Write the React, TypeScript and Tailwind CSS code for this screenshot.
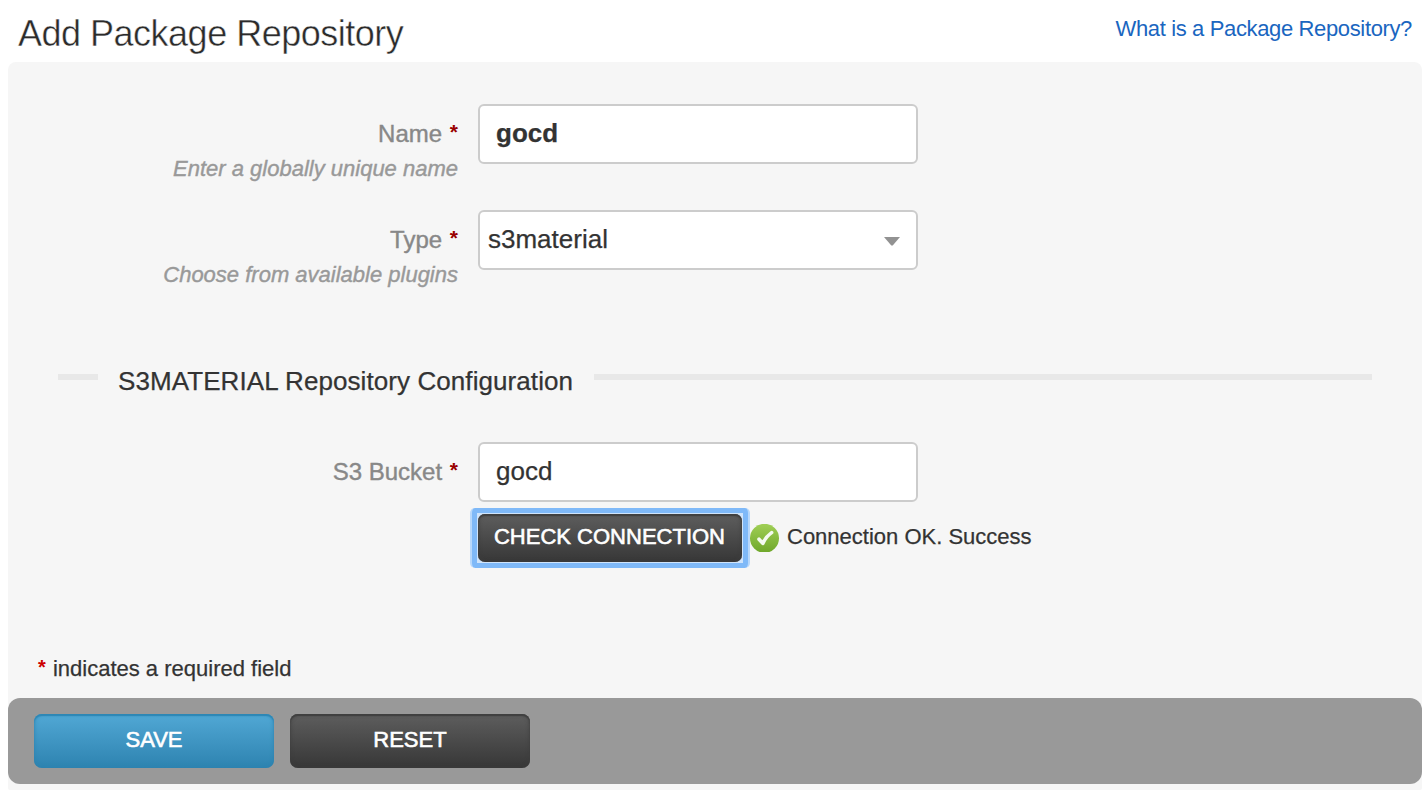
import type { ReactNode } from "react";

const fieldBox =
  "h-[60px] w-[440px] rounded-[6px] border-2 border-[#ccc] bg-white text-[26px] leading-[54px] text-[#333] [-webkit-text-stroke:0.25px_#333]";
const buttonText =
  "text-[22px] leading-none text-white uppercase whitespace-nowrap [-webkit-text-stroke:0.6px_white]";
const darkButton =
  "bg-linear-to-b from-[#5e5e5e] to-[#373737] shadow-[inset_0_2px_1px_#404040,inset_0_0_4px_#3c3c3c]";

function Required() {
  return (
    <span className="ml-px align-[3px] text-[21px] leading-none font-bold text-[#990000] [-webkit-text-stroke:0]">
      *
    </span>
  );
}

function Field({ label, hint, children }: { label: string; hint?: string; children: ReactNode }) {
  return (
    <div className="flex h-[106px] gap-5">
      <div className="w-[450px] shrink-0 text-right">
        <div className="h-12 pt-3 text-[24px] leading-9 text-[#888] [-webkit-text-stroke:0.4px_#888]">
          {label} <Required />
        </div>
        {hint && (
          <div className="text-[22px] leading-[34px] text-[#999] italic [-webkit-text-stroke:0.4px_#999]">
            {hint}
          </div>
        )}
      </div>
      {children}
    </div>
  );
}

function CheckIcon() {
  return (
    <svg className="mt-4 h-7 w-[30px] shrink-0" viewBox="0 0 30 28">
      <defs>
        <linearGradient id="green" x1="0" y1="0" x2="0" y2="1">
          <stop offset="0" stopColor="#a0cf56" />
          <stop offset="1" stopColor="#6fa72a" />
        </linearGradient>
      </defs>
      <circle cx="14.5" cy="14.3" r="14.5" fill="url(#green)" />
      <path
        d="M9 15.2 L12.8 19.4 C14.8 15 17.6 11.400 21.6 8.6"
        fill="none"
        stroke="#f4faf0"
        strokeWidth="3.6"
        strokeLinejoin="round"
        strokeLinecap="round"
      />
    </svg>
  );
}

export default function App() {
  return (
    <div className="h-[790px] overflow-hidden bg-white font-['Liberation_Sans',Arial,sans-serif]">
      <header className="flex h-[62px] items-start justify-between pr-4 pl-[18px]">
        <h1 className="pt-[13px] text-[36px] leading-[42px] tracking-[-0.5px] text-[#2b2b2b] [-webkit-text-stroke:0.45px_white]">
          Add Package Repository
        </h1>
        <a
          href="#"
          className="pt-4 text-[22px] leading-[26px] tracking-[-0.36px] text-[#1a66c0]"
        >
          What is a Package Repository?
        </a>
      </header>

      <main className="mr-[6px] ml-2 flex h-[728px] flex-col rounded-t-[8px] rounded-b-[2px] bg-[#f6f6f6]">
        <div className="flex h-[636px] flex-col pt-[42px]">
          <Field label="Name" hint="Enter a globally unique name">
            <div className={`${fieldBox} px-4 font-bold`}>gocd</div>
          </Field>
          <Field label="Type" hint="Choose from available plugins">
            <div className={`${fieldBox} flex items-start justify-between pr-4 pl-2`}>
              <span>s3material</span>
              <svg className="mt-[25px] h-[9px] w-4" viewBox="0 0 16 9">
                <path d="M0 0 H16 L8.7 8.5 H7.3 Z" fill="#929292" />
              </svg>
            </div>
          </Field>

          <div className="mt-[44px] flex h-[52px] items-start pr-[50px] pl-[50px]">
            <div className="mt-[14px] h-[6px] w-10 bg-[#e8e8e8]" />
            <h2 className="ml-5 w-[476px] pt-px text-[26px] leading-[40px] tracking-[0.08px] whitespace-nowrap text-[#333] [-webkit-text-stroke:0.25px_#333]">
              S3MATERIAL Repository Configuration
            </h2>
            <div className="mt-[14px] h-[6px] flex-1 bg-[#e8e8e8]" />
          </div>

          <div className="mt-[30px]">
            <Field label="S3 Bucket">
              <div>
                <div className={`${fieldBox} px-4`}>gocd</div>
                <div className="-ml-2 flex items-start pt-[6px]">
                  <div className="h-[60px] w-[280px] shrink-0 rounded-[5px] border-x-2 border-[#b8d8fb] bg-[#7fb9f8] p-[5px]">
                    <div className="h-full w-full bg-[#cfe4fb] p-px">
                      <button
                        className={`${darkButton} ${buttonText} flex h-full w-full items-center justify-center rounded-[7px] pr-px pb-[3px]`}
                      >
                        Check Connection
                      </button>
                    </div>
                  </div>
                  <CheckIcon />
                  <span className="ml-[7px] pt-px text-[22px] leading-[56px] whitespace-nowrap text-[#333] [-webkit-text-stroke:0.25px_#333]">
                    Connection OK. Success
                  </span>
                </div>
              </div>
            </Field>
          </div>

          <p className="mt-auto mb-[11px] ml-[30px] h-9 text-[22px] leading-9 text-[#333] [-webkit-text-stroke:0.25px_#333]">
            <span className="mr-px align-[2px] text-[20px] leading-none font-bold text-[#cc0000] [-webkit-text-stroke:0]">
              *
            </span>{" "}
            indicates a required field
          </p>
        </div>

        <footer className="flex h-[86px] shrink-0 items-start gap-4 rounded-[12px] bg-[#999] px-[26px] pt-4">
          <button
            className={`${buttonText} flex h-[54px] w-[240px] items-center justify-center rounded-[8px] bg-linear-to-b from-[#51a8d5] to-[#2d83b0] pb-[2px] shadow-[inset_0_2px_1px_#2d87b5,inset_0_0_4px_#2d82ae]`}
          >
            Save
          </button>
          <button
            className={`${darkButton} ${buttonText} flex h-[54px] w-[240px] items-center justify-center rounded-[8px] pb-[2px]`}
          >
            Reset
          </button>
        </footer>
      </main>
    </div>
  );
}
